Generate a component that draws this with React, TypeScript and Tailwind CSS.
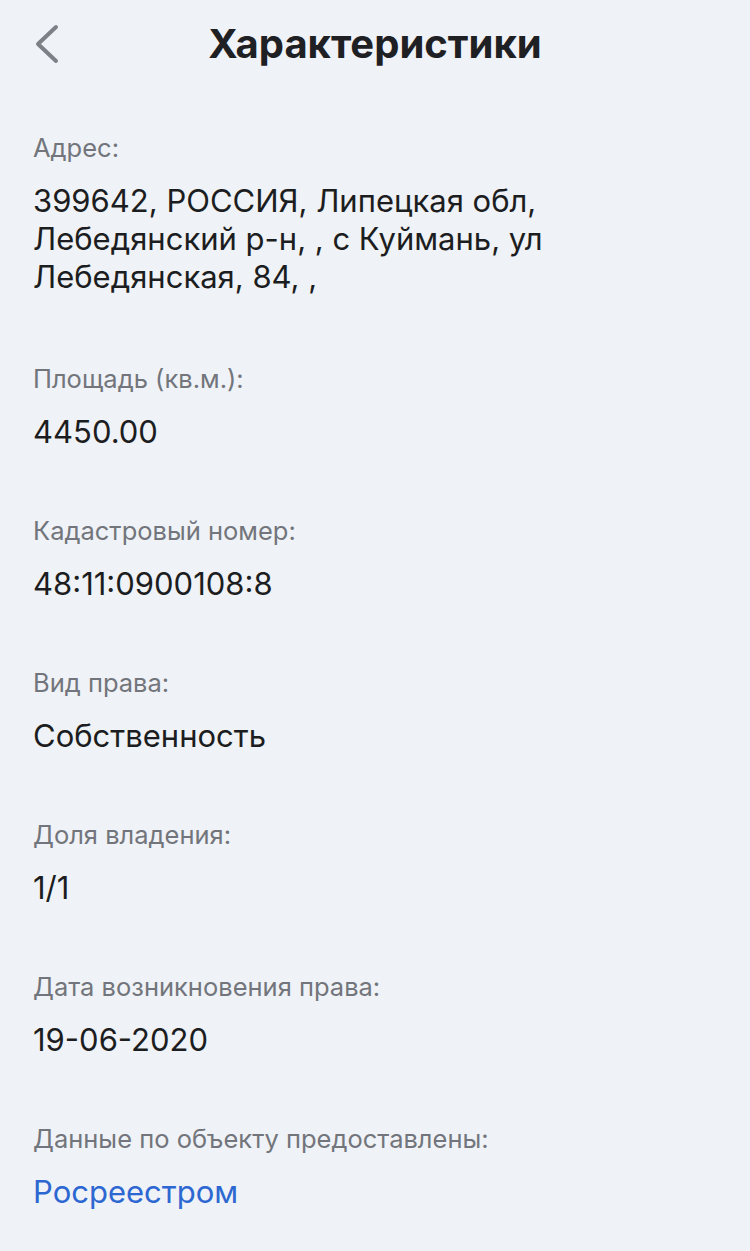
interface Field {
  label: string;
  value: string;
  link?: boolean;
}

const fields: Field[] = [
  { label: 'Адрес:', value: '399642, РОССИЯ, Липецкая обл, Лебедянский р-н, , с Куймань, ул Лебедянская, 84, ,' },
  { label: 'Площадь (кв.м.):', value: '4450.00' },
  { label: 'Кадастровый номер:', value: '48:11:0900108:8' },
  { label: 'Вид права:', value: 'Собственность' },
  { label: 'Доля владения:', value: '1/1' },
  { label: 'Дата возникновения права:', value: '19-06-2020' },
  { label: 'Данные по объекту предоставлены:', value: 'Росреестром', link: true },
];

export default function App() {
  return (
    <div className="min-h-[1251px] w-[750px] bg-[#eff2f6] font-['Inter',sans-serif]">
      {/* Header */}
      <div className="relative flex h-[88px] items-center justify-center">
        <button className="absolute left-[34px] top-[24px] text-[#7c8087]" aria-label="Назад">
          <svg width="26" height="40" viewBox="0 0 26 40" fill="none">
            <polyline points="22,3 4,20 22,37" stroke="currentColor" strokeWidth="4" strokeLinecap="round" strokeLinejoin="round" />
          </svg>
        </button>
        <h1 className="text-[40px] font-bold leading-[48px] text-[#1f2023]">Характеристики</h1>
      </div>

      <div className="flex flex-col gap-[64px] px-[33px] pt-[44px]">
        {fields.map((f) => (
          <div key={f.label} className="flex flex-col gap-[18px] first:mb-[3px]">
            <div className="text-[25.5px] leading-[32px] text-[#72757b]">{f.label}</div>
            <div
              className={`text-[31px] leading-[38px] ${f.link ? 'text-[#2d67d1]' : 'text-[#1c1d20]'} max-w-[560px]`}
            >
              {f.value}
            </div>
          </div>
        ))}
      </div>
    </div>
  );
}
